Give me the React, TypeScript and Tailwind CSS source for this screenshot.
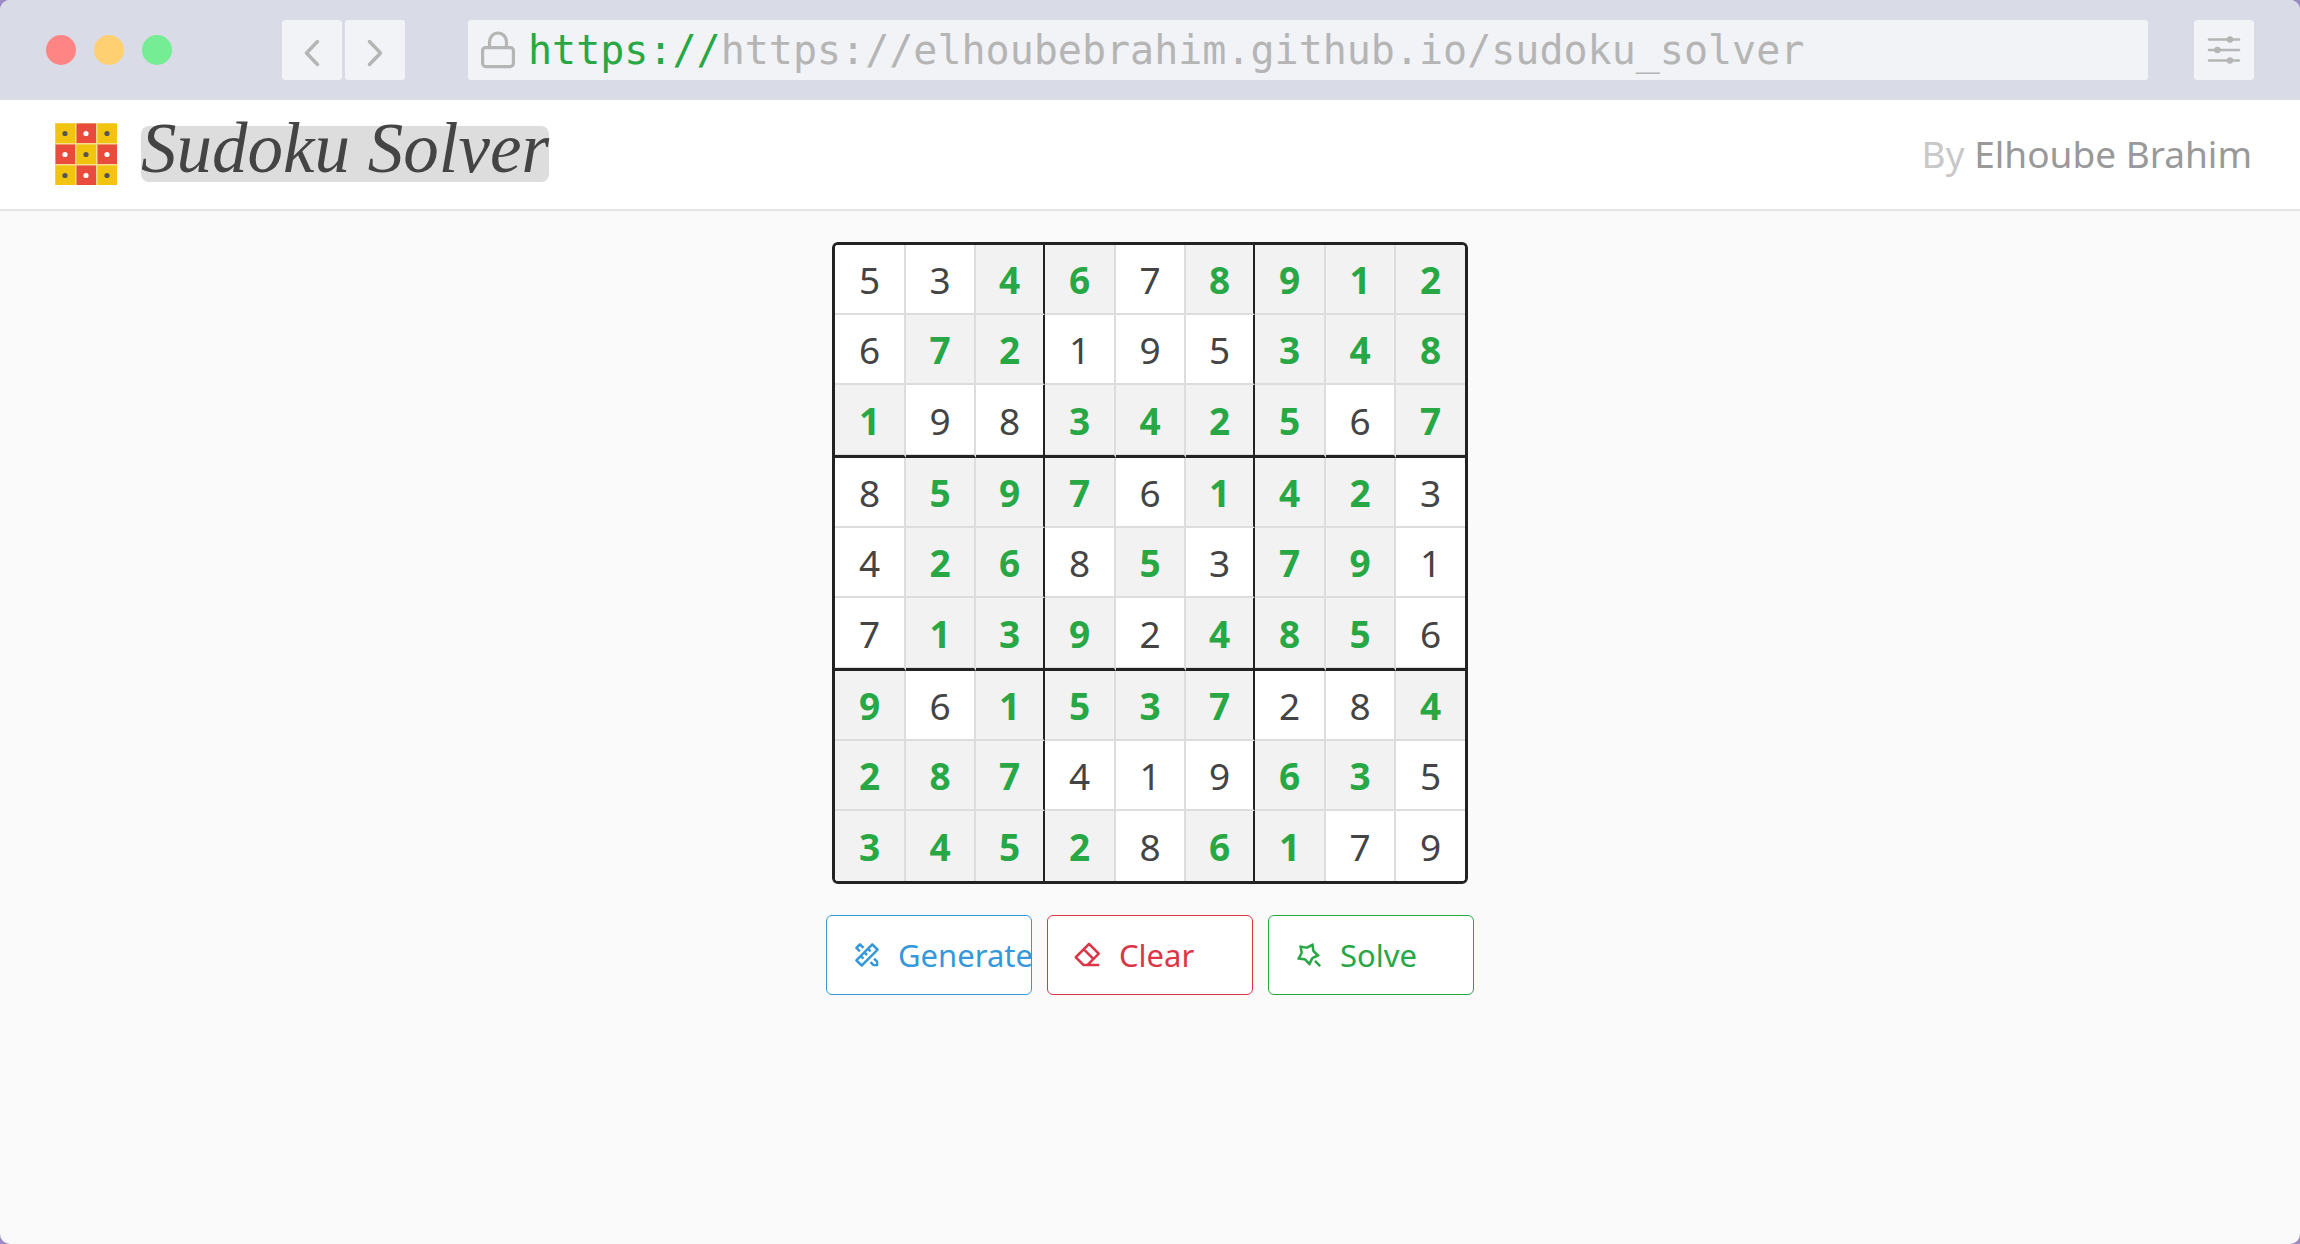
import { RiEraserLine, RiMagicLine, RiPencilRuler2Line } from 'react-icons/ri';

const SOLVED = [
  '534678912',
  '672195348',
  '198342567',
  '859761423',
  '426853791',
  '713924856',
  '961537284',
  '287419635',
  '345286179',
];

// '#' marks a given, '.' a value filled in by the solver
const GIVENS = [
  '##..#....',
  '#..###...',
  '.##....#.',
  '#...#...#',
  '#..#.#..#',
  '#...#...#',
  '.#....##.',
  '...###..#',
  '....#..##',
];

const COL_WIDTHS = ['w-[71px]', 'w-[70px]', 'w-[69px]'];

const ACTIONS = [
  { label: 'Generate', Icon: RiPencilRuler2Line, style: 'border-[#3498db] text-[#3498db]' },
  { label: 'Clear', Icon: RiEraserLine, style: 'border-[#dc3545] text-[#dc3545]' },
  { label: 'Solve', Icon: RiMagicLine, style: 'border-[#28a745] text-[#28a745]' },
];

function BrowserBar() {
  return (
    <div className="flex h-[100px] items-center bg-[#d9dbe6] px-[46px]">
      <div className="flex gap-[18px]">
        <span className="size-[30px] rounded-full bg-[#ff8585]" />
        <span className="size-[30px] rounded-full bg-[#ffd071]" />
        <span className="size-[30px] rounded-full bg-[#74ed94]" />
      </div>

      <div className="ml-[110px] flex gap-[3px] text-[#b5b5b5]">
        <button type="button" aria-label="Back" className="size-[60px] rounded-[3px] bg-[#f1f3f7]">
          <svg viewBox="0 0 60 60" className="size-full" fill="none" stroke="currentColor" strokeWidth="3.500" strokeLinecap="round" strokeLinejoin="round">
            <path d="M35.5 21.500 24.500 33l11 11.500" />
          </svg>
        </button>
        <button type="button" aria-label="Forward" className="size-[60px] rounded-[3px] bg-[#f1f3f7]">
          <svg viewBox="0 0 60 60" className="size-full" fill="none" stroke="currentColor" strokeWidth="3.500" strokeLinecap="round" strokeLinejoin="round">
            <path d="M24.500 21.500l11 11.500-11 11.500" />
          </svg>
        </button>
      </div>

      <div className="ml-[63px] flex h-[60px] flex-1 items-center gap-[13px] rounded-[3px] bg-[#f1f3f7] pl-[13px]">
        <svg viewBox="0 0 34 38" className="h-[38px] w-[34px] shrink-0" fill="none" stroke="#b5b5b5" strokeWidth="3.200">
          <rect x="1.600" y="16.600" width="30.800" height="19" rx="3" />
          <path d="M8.500 16.500v-5.500a8.500 9 0 0 1 17 0v5.500" />
        </svg>
        <p className="whitespace-nowrap font-['DejaVu_Sans_Mono',monospace] text-[40px] leading-[60px] text-[#b5b5b5]">
          <span className="text-[#28a745]">https://</span>https://elhoubebrahim.github.io/sudoku_solver
        </p>
      </div>

      <button type="button" aria-label="Settings" className="ml-[46px] size-[60px] rounded-[3px] bg-[#f1f3f7] text-[#b5b5b5]">
        <svg viewBox="0 0 60 60" className="size-full" fill="currentColor" stroke="currentColor">
          <path d="M15 19.500h30M15 30h30M15 40.500h30" strokeWidth="2.600" strokeLinecap="round" />
          <g stroke="none">
            <circle cx="36" cy="19.500" r="3.200" />
            <circle cx="23.500" cy="30" r="3.200" />
            <circle cx="36" cy="40.500" r="3.200" />
          </g>
        </svg>
      </button>
    </div>
  );
}

function Logo() {
  const cells = [0, 1, 2, 3, 4, 5, 6, 7, 8];
  return (
    <svg viewBox="0 0 62 62" className="size-[62px]" aria-hidden="true">
      <rect width="62" height="62" fill="#f7dc8c" />
      {cells.map((i) => {
        const x = (i % 3) * 21;
        const y = Math.floor(i / 3) * 21;
        const red = i % 2 === 1;
        return (
          <g key={i}>
            <rect x={x + 0.5} y={y + 0.5} width="19.500" height="19.500" fill={red ? '#e94b3c' : '#f1c40f'} />
            <circle cx={x + 10} cy={y + 10.5} r="2.600" fill={red ? '#fff' : '#555'} />
          </g>
        );
      })}
    </svg>
  );
}

function Header() {
  return (
    <header className="flex h-[111px] items-center justify-between border-b-2 border-[#e5e5e5] bg-white pb-0.5 pl-[55px] pr-12">
      <div className="flex items-center gap-6">
        <Logo />
        <h1 className="h-14 rounded-lg bg-[#ddd] font-['Liberation_Serif',serif] text-[71px] italic leading-[44px] text-[#444]">
          Sudoku Solver
        </h1>
      </div>
      <p className="text-[37px] text-[#c8c8c8]">
        By <a href="#author" className="text-[#999]">Elhoube Brahim</a>
      </p>
    </header>
  );
}

function rowStyle(r: number) {
  if (r === 8) return 'h-[70px]';
  return r % 3 === 2
    ? 'h-[73px] border-b-[3px] border-b-[#222] shadow-[inset_0_-1px_#ddd]'
    : 'h-[70px] border-b-2 border-b-[#ddd]';
}

function colStyle(c: number) {
  if (c === 8) return '';
  return c % 3 === 2 ? 'border-r-2 border-r-[#222]' : 'border-r-2 border-r-[#ddd]';
}

function Board() {
  return (
    <div className="overflow-hidden rounded-md border-[3px] border-[#222]">
      <table className="border-separate border-spacing-0">
        <tbody>
          {SOLVED.map((row, r) => (
            <tr key={r}>
              {row.split('').map((value, c) => {
                const tone =
                  GIVENS[r][c] === '#' ? 'bg-white text-[#444]' : 'bg-[#f2f2f2] font-bold text-[#28a745]';
                return (
                  <td
                    key={c}
                    className={`p-0 text-center text-[37px] leading-none ${tone} ${COL_WIDTHS[c % 3]} ${rowStyle(r)} ${colStyle(c)}`}
                  >
                    {value}
                  </td>
                );
              })}
            </tr>
          ))}
        </tbody>
      </table>
    </div>
  );
}

export default function App() {
  return (
    <div className="bg-[#9b8ac4]">
      <div className="flex min-h-screen flex-col overflow-hidden rounded-[10px] bg-[#fafafa] font-['Noto_Sans',sans-serif]">
        <BrowserBar />
        <Header />
        <main className="flex flex-col items-center gap-[31px] py-[31px]">
          <Board />
          <div className="flex gap-[15px]">
            {ACTIONS.map(({ label, Icon, style }) => (
              <button
                key={label}
                type="button"
                className={`flex h-20 w-[206px] items-center gap-4 whitespace-nowrap rounded-md border bg-white pl-[25px] text-[31px] ${style}`}
              >
                <Icon className="size-[30px] shrink-0" />
                {label}
              </button>
            ))}
          </div>
        </main>
      </div>
    </div>
  );
}
